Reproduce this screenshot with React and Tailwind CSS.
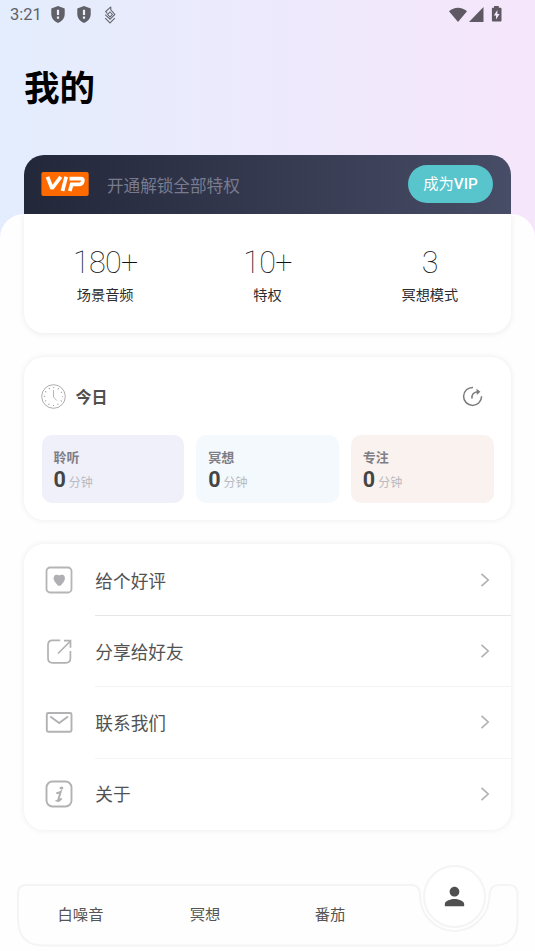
import { MdPerson } from "react-icons/md";

const stats = [
  { value: "180+", label: "场景音频" },
  { value: "10+", label: "特权" },
  { value: "3", label: "冥想模式" },
];

const today = [
  { label: "聆听", value: 0, color: "bg-[#f0f0fa]" },
  { label: "冥想", value: 0, color: "bg-[#f3f9fc]" },
  { label: "专注", value: 0, color: "bg-[#faf2ef]" },
];

const menu = [
  { label: "给个好评", icon: HeartBox, line: "border-[#e6e6e6]" },
  { label: "分享给好友", icon: ShareBox, line: "border-[#f3f3f3]" },
  { label: "联系我们", icon: Mail, line: "border-[#f5f5f5]" },
  { label: "关于", icon: InfoBox, line: "border-transparent" },
];

function Shield() {
  return (
    <svg width="14" height="17" viewBox="0 0 14 17">
      <path d="M7 0 13.700 2.500V8c0 4.200-2.800 7.600-6.700 8.900C3.100 15.600.3 12.200.3 8V2.500z" fill="#5f6068" />
      <path d="M5.900 3.800h2.200v5.200H5.900zM5.900 10.500h2.200v2.200H5.900z" fill="#eceffb" />
    </svg>
  );
}

function Knot() {
  return (
    <svg width="12" height="18" viewBox="0 0 12 18" fill="none" stroke="#66676f" strokeWidth="1.100">
      <path d="M6.800.8 1.700 5.600 3.500 7.600M6.800.8v3L10.800 8.500 6 13.200 1.200 8.700" />
      <path d="M6 6 8.300 8.500 6 11 3.700 8.500z" />
      <path d="M1.200 12.200 6 17l4.800-4.800" />
    </svg>
  );
}

function StatusBar() {
  return (
    <div className="flex h-[30px] items-center pl-[10px] pr-[32px] text-[#5f6068]">
      <span className="w-[40.500px] pt-[1px] font-[Roboto] text-[16.500px] leading-none">3:21</span>
      <div className="flex items-center gap-[12.500px] pb-[1px]">
        <Shield />
        <Shield />
        <Knot />
      </div>
      <svg className="ml-auto mb-[2px]" width="55" height="18" viewBox="0 0 55 18" fill="#5e5962">
        <path d="M1 6.200C6 1.500 14 1.500 19 6.200L10 17z" />
        <path d="M35.500 2v15H21z" />
        <path fillRule="evenodd" d="M46 1h4.800v1.700h1.900q.8 0 .8.800v12.200q0 .8-.8.800h-8q-.8 0-.8-.8V3.500q0-.8.800-.8H46zM49.400 5l-3.600 5.600H48v4l3.600-5.700h-2.200z" />
      </svg>
    </div>
  );
}

function VipBadge() {
  return (
    <svg className="mb-[1px]" width="48" height="24" viewBox="0 0 48 24">
      <rect x=".4" width="47.300" height="24" rx="2" fill="#ff6a00" />
      <g fill="none" stroke="#fff" strokeWidth="3.700">
        <path d="M6.500 4.800 11 16.500 19.800 4.800" strokeLinejoin="bevel" />
        <path d="M25.200 4.800 21.500 19" />
        <path d="M28.500 6.700h11.500q2.500 0 1.800 2.400-.8 3.300-3.700 3.300H30.700L28.800 19" />
      </g>
    </svg>
  );
}

function Clock() {
  return (
    <svg width="25" height="25" viewBox="0 0 25 25" fill="none" stroke="#8a8a8a">
      <circle cx="12.500" cy="12.500" r="11.800" strokeWidth=".7" />
      <circle cx="12.500" cy="12.500" r="9" strokeWidth="1.200" strokeDasharray=".9 3.812" strokeDashoffset=".45" />
      <path d="M12.500 6v7l3.200 3.500" strokeWidth=".6" />
    </svg>
  );
}

function ShareCircle() {
  return (
    <svg width="21" height="21" viewBox="0 0 21 21" fill="none" stroke="#7c7c7c" strokeWidth="1.500">
      <path d="M11 1.400a9 9 0 1 0 8.600 8.900" />
      <path d="M10 12.600Q9.300 6.200 16 5.800" />
      <path d="M14.500 2.700 18.400 5.700 14.800 9z" fill="#7c7c7c" stroke="none" />
    </svg>
  );
}

function HeartBox() {
  return (
    <svg width="28" height="28" viewBox="0 0 28 28">
      <rect x="1.500" y="1.500" width="25" height="25" rx="3.500" fill="none" stroke="#b5b5b7" strokeWidth="1.800" />
      <path d="M14.300 19.800q-1.100 0-1.900-.9l-2.600-3.200C7.700 13 8.500 9.200 11.200 8.800q1.900-.3 3.100.6 1.200-.9 3.100-.6c2.700.4 3.500 4.200 1.400 6.900l-2.600 3.200q-.8.900-1.900.9z" fill="#b0b0b4" />
    </svg>
  );
}

function ShareBox() {
  return (
    <svg width="28" height="28" viewBox="0 0 28 28" fill="none" stroke="#b2b2b4" strokeWidth="1.700">
      <path d="M15.200 2.400H7.500Q3 2.400 3 6.900v13.400q0 4.500 4.500 4.500h13.400q4.500 0 4.500-4.500v-7.300" />
      <path d="M13 15.500 25.500 3M19 2.700h6.500v7" />
    </svg>
  );
}

function Mail() {
  return (
    <svg width="28" height="28" viewBox="0 0 28 28" fill="none" stroke="#b2b2b4" strokeWidth="1.900">
      <rect x="1.800" y="4" width="24.700" height="18.700" rx="1.500" />
      <path d="M5.300 7.500 14.200 14 23 7.500" />
    </svg>
  );
}

function InfoBox() {
  return (
    <svg width="28" height="28" viewBox="0 0 28 28">
      <rect x="1.500" y="1.500" width="25" height="25" rx="6" fill="none" stroke="#b2b2b4" strokeWidth="1.900" />
      <ellipse cx="16.500" cy="8" rx="1.900" ry="1.600" fill="#b0b0b2" />
      <path d="M11.300 13.200q2.500-.2 4.400-1.400l-2.600 8.500q-.5 1.600 3.600-1.800" fill="none" stroke="#b0b0b2" strokeWidth="2" />
      <path d="M10.500 20.800h4" stroke="#b0b0b2" strokeWidth="1.500" />
    </svg>
  );
}

function Chevron() {
  return (
    <svg width="10" height="16" viewBox="0 0 10 16" fill="none" stroke="#b0b0b0" strokeWidth="1.600">
      <path d="M1.500 1.800 8.200 8 1.500 14.200" />
    </svg>
  );
}

function TabBar() {
  return (
    <nav className="relative ml-[16px] mt-[32px] h-[84px] w-[504px]">
      {/* outline with the notch for the active tab */}
      <svg className="absolute inset-0" width="504" height="86" viewBox="0 0 504 86" fill="none" stroke="#f4f4f4" strokeWidth="2">
        <path d="M10 23H395Q404 23 404 33C404 53 419 69 438.500 69S473.500 53 473.500 33Q474 23 483 23H493Q501.500 23 501.500 32V58Q501.500 83.500 477 83.500H28Q2 83.500 2 57V31Q2 23 10 23Z" />
        <circle cx="438.500" cy="34.500" r="30.500" fill="#fff" />
      </svg>
      <div className="relative flex h-full text-[15.300px] text-[#555]">
        <span className="mt-[39px] w-[129px] text-center leading-[24px]">白噪音</span>
        <span className="mt-[39px] w-[120px] text-center leading-[24px]">冥想</span>
        <span className="mt-[39px] w-[130px] text-center leading-[24px]">番茄</span>
        <MdPerson className="ml-[45px] mt-[20px] size-[29px] text-[#505050]" />
      </div>
    </nav>
  );
}

export default function App() {
  return (
    <div className="h-[951px] w-[535px] overflow-hidden bg-linear-to-r from-[#e3edfd] to-[#f6e6fb] font-['Noto_Sans_CJK_SC',sans-serif]">
      <StatusBar />
      <h1 className="ml-6 mt-[30px] h-[52px] text-[35.500px] font-bold leading-[52px] text-black">我的</h1>

      {/* VIP banner */}
      <div className="relative z-10 mx-6 mt-[43px] flex h-[59px] items-center rounded-t-[20px] bg-linear-to-r from-[#23273a] to-[#474d66] pl-[17px] pr-[18px]">
        <VipBadge />
        <span className="ml-[18px] pt-[2px] text-[16.600px] text-[#787b8d]">开通解锁全部特权</span>
        <button className="mb-[1px] ml-auto h-[38px] w-[85px] rounded-full bg-[#58c4cc] font-[Roboto,'Noto_Sans_CJK_SC',sans-serif] text-[15.300px] font-medium text-white">
          <span className="font-normal">成为</span>VIP
        </button>
      </div>

      <div className="h-[737px] rounded-t-[24px] bg-[#fefefe]">
        <section className="mx-6 grid h-[119px] grid-cols-3 rounded-b-[20px] bg-white text-center shadow-[0_1px_6px_rgba(0,0,0,0.08)]">
          {stats.map((s) => (
            <div key={s.label} className="pt-[31px]">
              <div className="font-[Roboto] text-[30.500px] font-thin leading-[36px] tracking-[-0.700px] text-[#111]">
                {s.value}
              </div>
              <div className="mt-[2px] text-[14.200px] leading-[22px] text-[#2c2c2c]">{s.label}</div>
            </div>
          ))}
        </section>

        <section className="mx-6 mt-[24px] h-[163px] rounded-[20px] bg-white px-[17.500px] pt-[26px] shadow-[0_0_6px_rgba(0,0,0,0.08)]">
          <div className="-ml-[.5px] flex h-[26px] items-center">
            <Clock />
            <h2 className="mb-[1px] ml-[9.500px] text-[16px] font-bold text-[#505050]">今日</h2>
            <div className="ml-auto mr-[11px]">
              <ShareCircle />
            </div>
          </div>
          <div className="mt-[26px] grid grid-cols-3 gap-3">
            {today.map((t) => (
              <div key={t.label} className={`h-[68px] rounded-[10px] pl-[12px] pt-[12px] ${t.color}`}>
                <div className="text-[13px] font-bold leading-[20px] text-[#7e7e86]">{t.label}</div>
                <div className="mt-[2px] flex items-baseline leading-[22px]">
                  <span className="font-[Roboto] text-[21.500px] font-bold text-[#454545]">{t.value}</span>
                  <span className="ml-[3px] text-[12px] text-[#b9b9c0]">分钟</span>
                </div>
              </div>
            ))}
          </div>
        </section>

        <section className="mx-6 mt-[24px] h-[286px] rounded-[20px] bg-white pt-[.7px] shadow-[0_0_6px_rgba(0,0,0,0.08)]">
          {menu.map(({ label, icon: Icon, line }) => (
            <div key={label} className="flex h-[71.300px] pl-[21px]">
              <div className="flex w-[50.300px] items-center">
                <Icon />
              </div>
              <div className={`flex flex-1 items-center border-b pr-[21px] ${line}`}>
                <span className="text-[17.700px] text-[#525252]">{label}</span>
                <span className="ml-auto">
                  <Chevron />
                </span>
              </div>
            </div>
          ))}
        </section>

        <TabBar />
      </div>
    </div>
  );
}
